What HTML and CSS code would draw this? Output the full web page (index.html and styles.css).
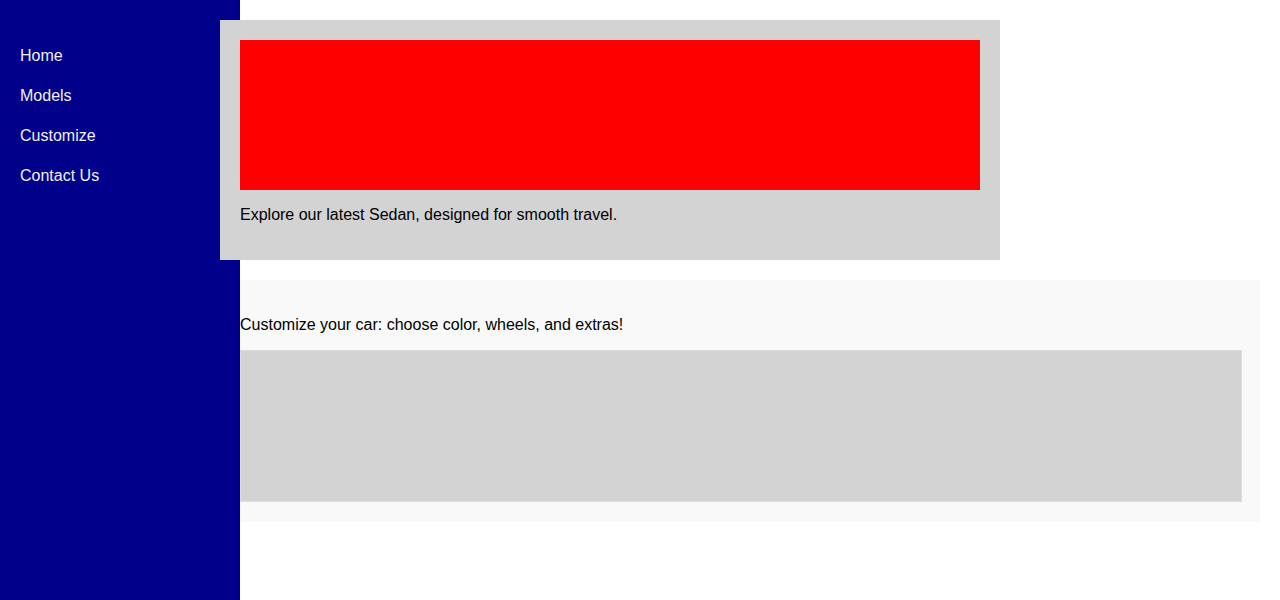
FILE: index.html
```html
<!DOCTYPE html>
<html lang="en">
<head>
<meta charset="utf-8">
<title>Cars</title>
<link rel="stylesheet" href="styles.css">
</head>
<body>
<nav class="sidebar">
  <ul class="nav-list">
    <li><a href="#">Home</a></li>
    <li><a href="#">Models</a></li>
    <li><a href="#">Customize</a></li>
    <li><a href="#">Contact Us</a></li>
  </ul>
</nav>
<main class="main">
  <section class="feature">
    <div class="feature-image"></div>
    <p class="text">Explore our latest Sedan, designed for smooth travel.</p>
  </section>
  <section class="customize">
    <p class="text">Customize your car: choose color, wheels, and extras!</p>
    <div class="preview"></div>
  </section>
</main>
</body>
</html>
```
FILE: styles.css
```css
html, body {
  margin: 0;
  padding: 0;
}
body {
  font-family: "Liberation Sans", Arial, sans-serif;
  font-size: 16px;
  color: #000;
  background: #fff;
}
.sidebar {
  position: fixed;
  top: 0;
  left: 0;
  width: 200px;
  height: 100vh;
  padding: 20px;
  background: #00008b;
  z-index: 1;
}
.nav-list {
  list-style: none;
  margin: 16px 0 0;
  padding: 0;
}
.nav-list li {
  line-height: 40px;
}
.nav-list a {
  color: #f0f0f0;
  text-decoration: none;
  display: block;
}
.main {
  margin-left: 220px;
  padding: 20px 20px 20px 0;
}
.feature {
  position: relative;
  z-index: 2;
  width: 740px;
  padding: 20px;
  background: #d3d3d3;
  margin-bottom: 20px;
}
.feature-image {
  height: 150px;
  background: #ff0000;
}
.text {
  margin: 16px 0;
}
.customize {
  padding: 20px;
  background: #f9f9f9;
}
.preview {
  width: 100%;
  height: 150px;
  background: #d3d3d3;
  border: 1px solid #dcdcdc;
}
```
